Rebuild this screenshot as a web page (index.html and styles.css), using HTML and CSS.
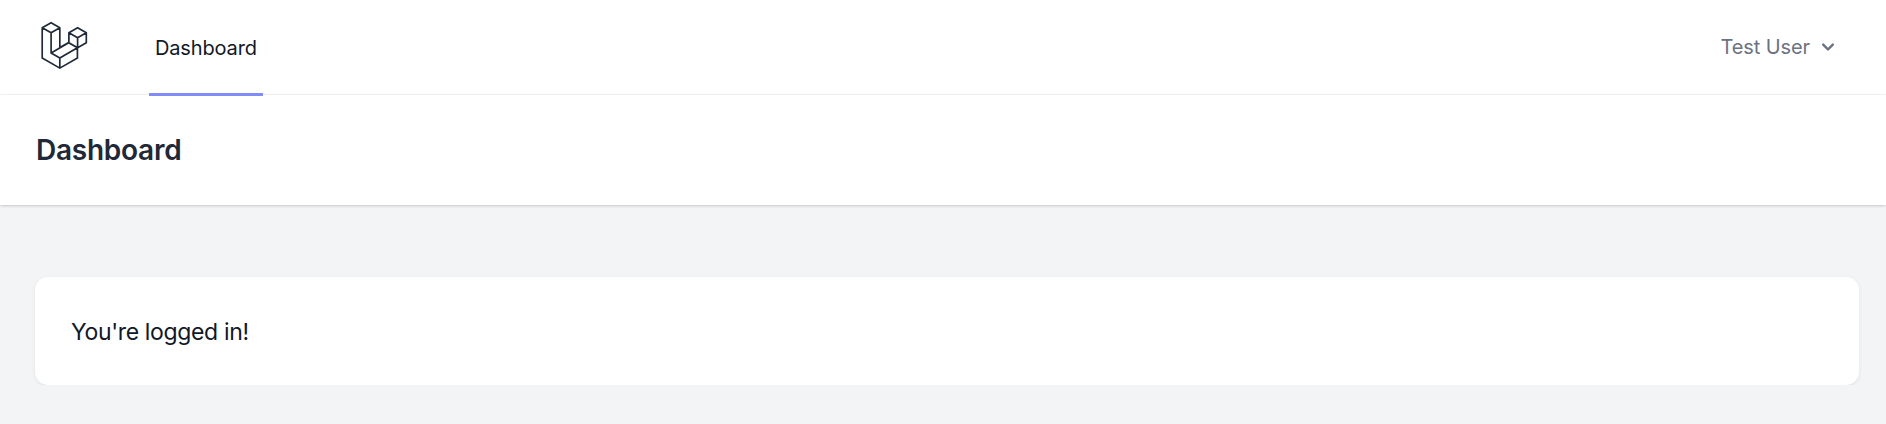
FILE: index.html
```html
<!DOCTYPE html>
<html lang="en">
<head>
    <meta charset="UTF-8">
    <meta name="viewport" content="width=device-width, initial-scale=1.0">
    <title>Dashboard</title>
    <link rel="stylesheet" href="styles.css">
</head>
<body>

<!-- Navigation -->
<nav class="nav">
    <div class="nav-left">
        <a href="#" class="logo">
            <svg class="logo-icon" viewBox="0 0 316 316" xmlns="http://www.w3.org/2000/svg">
                <path d="M37 52L90 22L142 52L90 82ZM37 52V233L142 293L247 233V172M142 52V170L195 140M90 82V203L142 233L247 172L195 142L90 203M142 233V293M196 82L248 52L300 82L248 112ZM196 82V142L248 172L300 142V82M248 112V172"/>
            </svg>
        </a>
        <a href="#" class="nav-link active">Dashboard</a>
    </div>
    <button class="user-menu">
        <span>Test User</span>
        <svg class="chevron" viewBox="0 0 20 20" xmlns="http://www.w3.org/2000/svg">
            <path fill-rule="evenodd" clip-rule="evenodd" d="M5.293 7.293a1 1 0 011.414 0L10 10.586l3.293-3.293a1 1 0 111.414 1.414l-4 4a1 1 0 01-1.414 0l-4-4a1 1 0 010-1.414z"/>
        </svg>
    </button>
</nav>

<!-- Page heading -->
<header class="page-header">
    <h2>Dashboard</h2>
</header>

<main class="content">
    <div class="card">You're logged in!</div>
</main>

</body>
</html>
```

FILE: styles.css
```css
body {
    font-family: 'Inter', 'Noto Sans', sans-serif;
    background-color: #f3f4f6;
    color: #111827;
    margin: 0;
    padding: 0;
    overflow: hidden;
}
a {
    text-decoration: none;
}
.nav {
    display: flex;
    justify-content: space-between;
    height: 94px;
    padding: 0 35px 0 36px;
    background-color: #fff;
    border-bottom: 1px solid #f3f4f6;
}
.nav-left {
    display: flex;
    align-items: stretch;
    gap: 60px;
}
.logo {
    display: flex;
    align-items: center;
    padding-bottom: 3px;
}
.logo-icon {
    width: 53px;
    height: 53px;
    fill: none;
    stroke: #1f2937;
    stroke-width: 10;
    stroke-linejoin: round;
}
.nav-link {
    display: flex;
    align-items: center;
    height: 96px;
    box-sizing: border-box;
    padding: 3px 6px 0 6px;
    border-bottom: 3px solid #818cf8;
    font-size: 20px;
    letter-spacing: -0.15px;
    color: #111827;
}
.user-menu {
    display: flex;
    align-items: center;
    gap: 6px;
    padding: 0 11px 0 0;
    border: none;
    background: none;
    font-family: inherit;
    font-size: 20px;
    letter-spacing: -0.1px;
    color: #6b7280;
}
.chevron {
    width: 24px;
    height: 24px;
    fill: #6b7280;
}
.page-header {
    box-sizing: border-box;
    height: 110px;
    padding: 0 36px;
    display: flex;
    align-items: center;
    background-color: #fff;
    box-shadow: 0 1px 3px 0 rgba(0, 0, 0, 0.14), 0 1px 2px -1px rgba(0, 0, 0, 0.14);
}
.page-header h2 {
    margin: 0;
    font-size: 28px;
    font-weight: 600;
    letter-spacing: -0.25px;
    color: #1f2937;
}
.content {
    padding: 72px 27px 0 35px;
}
.card {
    height: 108px;
    box-sizing: border-box;
    padding: 2px 36px 0;
    display: flex;
    align-items: center;
    background-color: #fff;
    border-radius: 13px;
    font-size: 23px;
    letter-spacing: -0.35px;
    box-shadow: 0 1px 4px 0 rgba(0, 0, 0, 0.07), 0 1px 2px -1px rgba(0, 0, 0, 0.06);
}
```
